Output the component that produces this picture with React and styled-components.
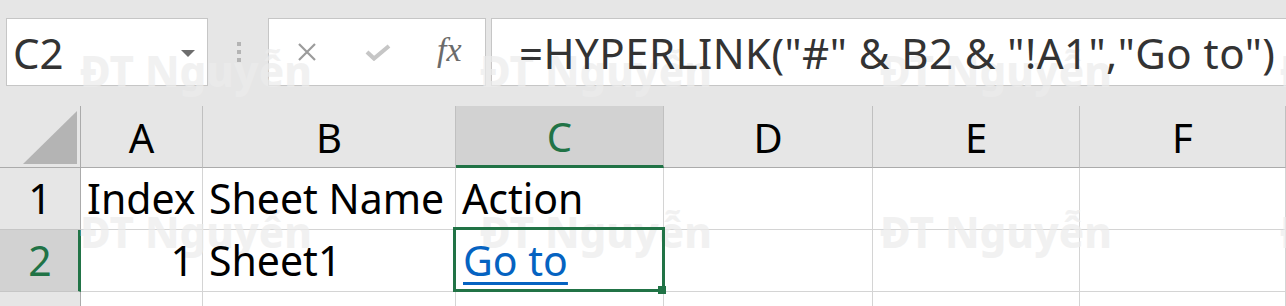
import React from 'react';
import styled, { createGlobalStyle, css } from 'styled-components';

const GREEN = '#217346';

const GlobalStyle = createGlobalStyle`
  html, body {
    margin: 0;
    padding: 0;
    background: #e6e6e6;
  }
  body {
    font-family: "Noto Sans", "Open Sans", sans-serif;
  }
`;

const Window = styled.div`
  position: relative;
  width: 1286px;
  height: 306px;
  overflow: hidden;
  background: #e6e6e6;
  font-family: "Noto Sans", "Open Sans", sans-serif;
`;

/* ---------- formula bar ---------- */

const Toolbar = styled.div`
  display: flex;
  align-items: stretch;
  height: 68px;
  padding: 18px 0 20px 6px;
`;

const Field = styled.div`
  display: flex;
  align-items: center;
  box-sizing: border-box;
  height: 68px;
  background: #fff;
  border: 1px solid #c6c6c6;
`;

const NameBox = styled(Field)`
  width: 202px;
  padding: 0 12px 0 6px;
  justify-content: space-between;
`;

const NameText = styled.span`
  position: relative;
  z-index: 2;
  font-size: 42px;
  line-height: 66px;
  padding-top: 2px;
  color: #333;
`;

const DropArrow = styled.span`
  position: relative;
  z-index: 2;
  width: 0;
  height: 0;
  margin-top: 2px;
  border-left: 7px solid transparent;
  border-right: 7px solid transparent;
  border-top: 7px solid #6d6d6d;
`;

const Splitter = styled.div`
  width: 60px;
  display: flex;
  flex-direction: column;
  align-items: center;
  justify-content: center;
  gap: 4px;
  padding-left: 1px;
  box-sizing: border-box;
`;

const Dot = styled.span`
  width: 4px;
  height: 4px;
  background: #b4b4b4;
`;

const ButtonBox = styled(Field)`
  width: 218px;
`;

const ToolButton = styled.span`
  position: relative;
  z-index: 2;
  flex: 1;
  display: flex;
  align-items: center;
  justify-content: center;
  ${p => p.$nudge && css`margin-left: ${p.$nudge}px;`}
`;

const FxText = styled.span`
  font-family: "Liberation Serif", "Times New Roman", serif;
  font-style: italic;
  font-size: 34px;
  color: #6b6b6b;
  line-height: 1;
  margin-top: -4px;
`;

const FormulaBox = styled(Field)`
  flex: 1;
  margin-left: 5px;
  margin-right: -10px;
  padding-left: 27px;
`;

const FormulaText = styled.span`
  position: relative;
  z-index: 2;
  font-size: 42px;
  line-height: 66px;
  padding-top: 2px;
  letter-spacing: 0.45px;
  color: #333;
  white-space: pre;
`;

/* ---------- sheet grid ---------- */

const Sheet = styled.div`
  display: grid;
  grid-template-columns: 81px 122px 253px 208px 209px 207px 1fr;
  grid-template-rows: 62px 62px 62px 1fr;
  height: 200px;
`;

const Corner = styled.div`
  box-sizing: border-box;
  border-right: 1px solid #ababab;
  border-bottom: 1px solid #ababab;
  display: flex;
  align-items: flex-end;
  justify-content: flex-end;
  padding: 0 3px 3px 0;
`;

const CornerTriangle = styled.span`
  width: 0;
  height: 0;
  border-left: 54px solid transparent;
  border-bottom: 53px solid #b4b4b4;
`;

const ColHead = styled.div`
  box-sizing: border-box;
  text-align: center;
  font-size: 40px;
  line-height: 58px;
  padding-top: 3px;
  color: #000;
  border-right: 1px solid #c0c0c0;
  border-bottom: 1px solid #ababab;
  ${p => p.$active && css`
    background: #d2d2d2;
    color: ${GREEN};
    border-bottom: 3px solid ${GREEN};
    line-height: 56px;
  `}
`;

const RowHead = styled.div`
  box-sizing: border-box;
  text-align: center;
  font-size: 41px;
  line-height: 61px;
  color: #000;
  border-right: 1px solid #ababab;
  border-bottom: 1px solid #c6c6c6;
  ${p => p.$active && css`
    background: #d2d2d2;
    color: ${GREEN};
    border-right: 3px solid ${GREEN};
    padding-left: 2px;
  `}
`;

const Cell = styled.div`
  position: relative;
  box-sizing: border-box;
  background: #fff;
  border-right: 1px solid #d4d4d4;
  border-bottom: 1px solid #d4d4d4;
  font-size: 41px;
  line-height: 61px;
  color: #000;
  padding: 0 8px 0 6px;
  white-space: nowrap;
  text-align: ${p => (p.$align === 'right' ? 'right' : 'left')};
`;

const CellText = styled.span`
  position: relative;
  z-index: 2;
`;

const LinkText = styled(CellText)`
  color: #0563c1;
  text-decoration: underline;
  text-decoration-thickness: 3px;
  text-underline-offset: 6px;
  margin-left: 1px;
`;

const ActiveFrame = styled.span`
  position: absolute;
  z-index: 3;
  top: -3px;
  left: -3px;
  right: -2px;
  bottom: -1px;
  border: 3px solid ${GREEN};
  pointer-events: none;
`;

const FillHandle = styled.span`
  position: absolute;
  z-index: 4;
  right: -3px;
  bottom: -3px;
  width: 8px;
  height: 8px;
  background: ${GREEN};
`;

/* ---------- watermark ---------- */

const Watermark = styled.div`
  position: absolute;
  inset: 0;
  z-index: 1;
  pointer-events: none;
  display: grid;
  grid-template-columns: repeat(4, 400px);
  grid-auto-rows: 161px;
  padding: 50px 0 0 80px;
`;

const Mark = styled.span`
  font-family: "Noto Sans", sans-serif;
  font-weight: 800;
  font-size: 42px;
  line-height: 1;
  color: rgba(236, 236, 236, 0.72);
  white-space: nowrap;
`;

const columns = ['A', 'B', 'C', 'D', 'E', 'F'];
const rows = [
  { n: 1, cells: [{ v: 'Index' }, { v: 'Sheet Name' }, { v: 'Action' }, {}, {}, {}] },
  { n: 2, active: true, cells: [{ v: '1', align: 'right' }, { v: 'Sheet1' }, { v: 'Go to', link: true, selected: true }, {}, {}, {}] },
  { n: 3, cells: [{}, {}, {}, {}, {}, {}] },
];

function CloseIcon() {
  return (
    <svg width="20" height="20" viewBox="0 0 20 20">
      <path d="M2 2 L18 18 M18 2 L2 18" stroke="#9b9b9b" strokeWidth="2.2" fill="none" />
    </svg>
  );
}

function CheckIcon() {
  return (
    <svg width="26" height="17" viewBox="0 0 26 17">
      <polyline points="2,8 9,14.5 24,2" stroke="#c6c6c6" strokeWidth="4.2" fill="none" strokeLinejoin="miter" />
    </svg>
  );
}

export default function App() {
  return (
    <Window>
      <GlobalStyle />
      <Toolbar>
        <NameBox>
          <NameText>C2</NameText>
          <DropArrow />
        </NameBox>
        <Splitter>
          <Dot />
          <Dot />
          <Dot />
        </Splitter>
        <ButtonBox>
          <ToolButton $nudge={2}><CloseIcon /></ToolButton>
          <ToolButton><CheckIcon /></ToolButton>
          <ToolButton><FxText>fx</FxText></ToolButton>
        </ButtonBox>
        <FormulaBox>
          <FormulaText>=HYPERLINK("#" &amp; B2 &amp; "!A1","Go to")</FormulaText>
        </FormulaBox>
      </Toolbar>

      <Sheet>
        <Corner><CornerTriangle /></Corner>
        {columns.map(c => (
          <ColHead key={c} $active={c === 'C'}>{c}</ColHead>
        ))}
        {rows.map(r => (
          <React.Fragment key={r.n}>
            <RowHead $active={r.active}>{r.n}</RowHead>
            {r.cells.map((cell, i) => (
              <Cell key={i} $align={cell.align}>
                {cell.link ? (
                  <LinkText>{cell.v}</LinkText>
                ) : (
                  cell.v && <CellText>{cell.v}</CellText>
                )}
                {cell.selected && (
                  <>
                    <ActiveFrame />
                    <FillHandle />
                  </>
                )}
              </Cell>
            ))}
          </React.Fragment>
        ))}
      </Sheet>

      <Watermark>
        {Array.from({ length: 8 }).map((_, i) => (
          <Mark key={i}>ĐT Nguyễn</Mark>
        ))}
      </Watermark>
    </Window>
  );
}
